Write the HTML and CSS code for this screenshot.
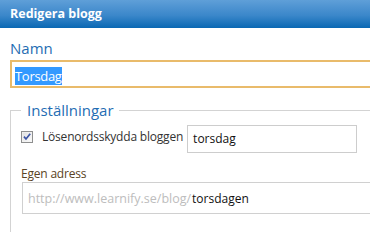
FILE: index.html
```html
<!DOCTYPE html>
<html lang="sv">
<head>
<meta charset="utf-8">
<title>Redigera blogg</title>
<link rel="stylesheet" href="styles.css">
</head>
<body>
<div class="dialog">
  <div class="titlebar">Redigera blogg</div>
  <div class="content">
    <div class="field-label">Namn</div>
    <div class="name-input"><span class="selected">Torsdag</span></div>
    <fieldset class="settings">
      <legend>Inställningar</legend>
      <div class="check-row">
        <span class="checkbox">
          <svg width="12" height="12" viewBox="0 0 12 12">
            <defs>
              <linearGradient id="cbg" x1="0" y1="0" x2="1" y2="1">
                <stop offset="0" stop-color="#dcdcdc"/>
                <stop offset="1" stop-color="#ffffff"/>
              </linearGradient>
            </defs>
            <rect x="0.5" y="0.5" width="11" height="11" fill="url(#cbg)" stroke="#8e8f8f"/>
            <rect x="1.5" y="1.5" width="9" height="9" fill="none" stroke="#f4f4f4" stroke-width="0.6"/>
            <path d="M3 5.6 L5 8 L9.2 2.8" fill="none" stroke="#3c54a5" stroke-width="1.7"/>
          </svg>
        </span>
        <span class="check-label">Lösenordsskydda bloggen</span>
        <div class="pw-input">torsdag</div>
      </div>
      <div class="addr-label">Egen adress</div>
      <div class="addr-input"><span class="prefix">http://www.learnify.se/blog/</span><span class="value">torsdagen</span></div>
    </fieldset>
  </div>
</div>
</body>
</html>
```
FILE: styles.css
```css
html, body {
  margin: 0;
  padding: 0;
  background: #ffffff;
  overflow: hidden;
}
body {
  font-family: "Open Sans", "Noto Sans", sans-serif;
  width: 370px;
  height: 232px;
}
.dialog {
  width: 370px;
  height: 232px;
  overflow: hidden;
}
.titlebar {
  height: 28px;
  line-height: 28px;
  padding-left: 10px;
  color: #ffffff;
  font-weight: bold;
  font-size: 12.5px;
  background: linear-gradient(to bottom, #5f9fd8 0%, #3b87ca 55%, #0a68b3 100%);
}
.content {
  padding: 10px 0 0 10px;
}
.field-label {
  font-size: 15px;
  line-height: 20px;
  color: #1f6db3;
}
.name-input {
  margin-top: 2px;
  border: 2px solid #e9bb6b;
  border-right: none;
  padding: 2px 0 0 3px;
  box-sizing: border-box;
  height: 28px;
}
.selected {
  display: inline-block;
  background: #3399ff;
  color: #ffffff;
  font-size: 13px;
  line-height: 18px;
  letter-spacing: -0.3px;
  padding-right: 0.5px;
}
.settings {
  margin: 12px 0 0 0;
  padding: 0 0 18px 10px;
  border: 1px solid #d3d3d3;
  border-right: none;
  border-bottom: none;
  min-width: 0;
}
.settings legend {
  font-size: 15px;
  line-height: 20px;
  color: #1f6db3;
  padding: 0 5px 0 6px;
}
.check-row {
  display: flex;
  margin-top: 5px;
  height: 28px;
}
.checkbox {
  width: 12px;
  height: 12px;
  margin-top: 6px;
  display: block;
}
.checkbox svg {
  display: block;
}
.check-label {
  margin-left: 9px;
  margin-top: 4px;
  font-size: 12px;
  line-height: 16px;
  letter-spacing: -0.2px;
  color: #333333;
}
.pw-input {
  margin-left: 4px;
  width: 170px;
  height: 28px;
  box-sizing: border-box;
  border: 1px solid #cdcdcd;
  padding-left: 5px;
  font-size: 12px;
  line-height: 25px;
  color: #111111;
}
.addr-label {
  margin-top: 13px;
  font-size: 12px;
  line-height: 16px;
  letter-spacing: -0.2px;
  color: #5a4325;
}
.addr-input {
  margin: 0 0 0 1px;
  height: 32px;
  box-sizing: border-box;
  border: 1px solid #d0d0d0;
  border-right: none;
  padding-left: 5px;
  display: flex;
  align-items: center;
  font-size: 12.5px;
  line-height: 17px;
}
.prefix {
  color: #bdbdbd;
}
.value {
  color: #111111;
  font-size: 12px;
  margin-left: 1px;
}
```
